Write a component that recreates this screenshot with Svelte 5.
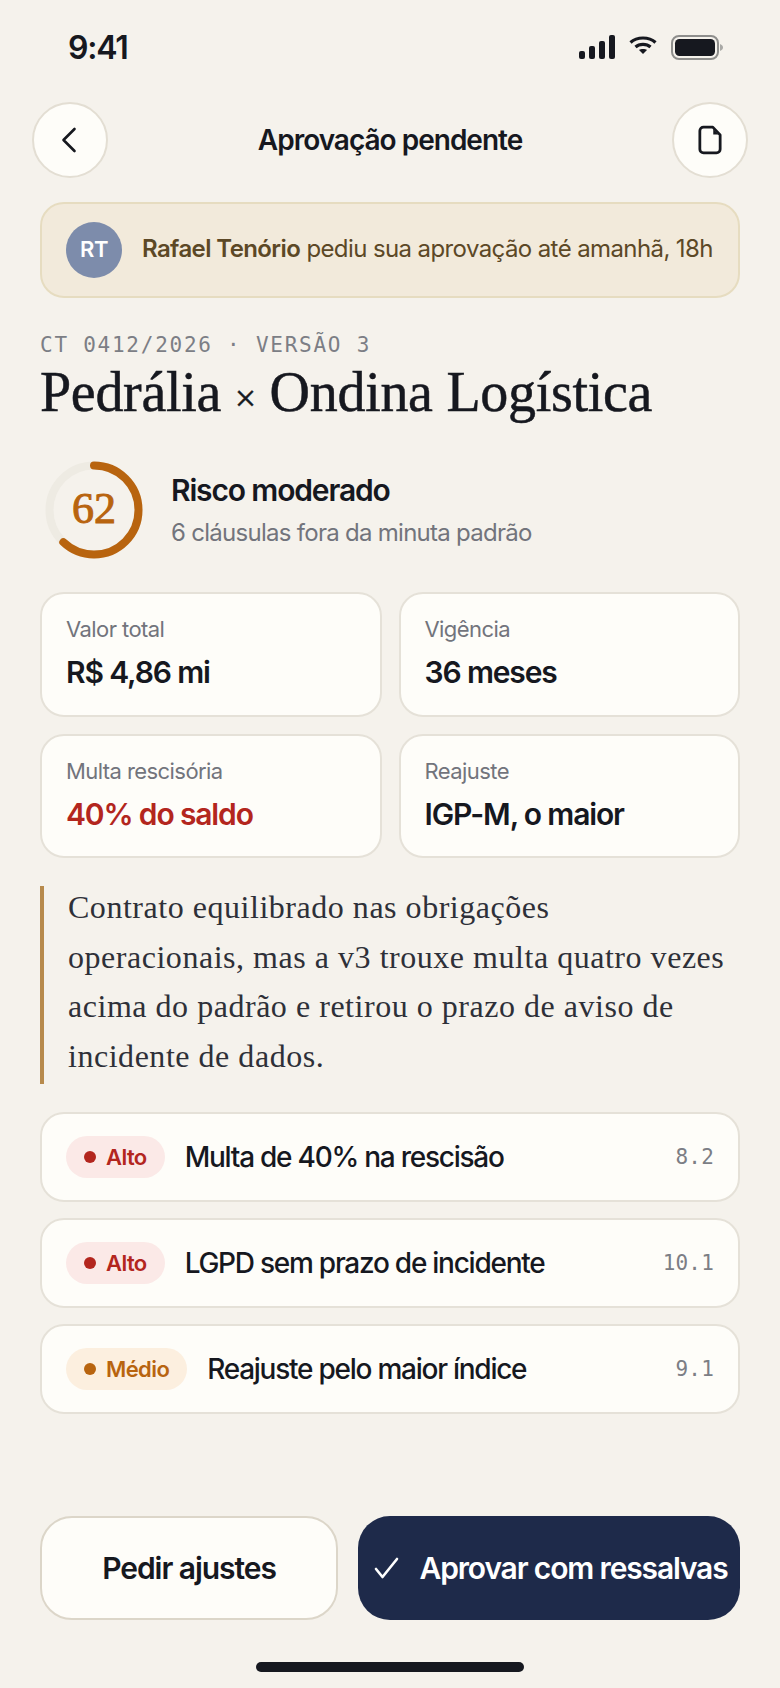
<script>
  const stats = [
    { label: "Valor total", value: "R$ 4,86 mi" },
    { label: "Vigência", value: "36 meses" },
    { label: "Multa rescisória", value: "40% do saldo", danger: true },
    { label: "Reajuste", value: "IGP-M, o maior" },
  ];
  const clauses = [
    { level: "Alto", kind: "high", title: "Multa de 40% na rescisão", ref: "8.2" },
    { level: "Alto", kind: "high", title: "LGPD sem prazo de incidente", ref: "10.1" },
    { level: "Médio", kind: "mid", title: "Reajuste pelo maior índice", ref: "9.1" },
  ];
</script>

<div class="screen">
  <div class="status">
    <span class="time">9:41</span>
    <div class="status-icons">
      <svg width="36" height="24" viewBox="0 0 36 24" fill="#16181f">
        <rect x="0" y="16" width="6" height="8" rx="2" />
        <rect x="10" y="11" width="6" height="13" rx="2" />
        <rect x="20" y="6" width="6" height="18" rx="2" />
        <rect x="30" y="0" width="6" height="24" rx="2" />
      </svg>
      <svg class="wifi" width="28" height="18" viewBox="0 0 28 18" fill="none" stroke="#16181f" stroke-width="3.2">
        <path d="M1.5 6.5 C8 0.5 20 0.5 26.5 6.5" />
        <path d="M6.5 11 C10.5 7.5 17.5 7.5 21.5 11" />
        <path d="M14 18 L10 14 C12 12.6 16 12.6 18 14 Z" fill="#16181f" stroke="none" />
      </svg>
      <svg width="52" height="25" viewBox="0 0 52 25">
        <rect x="1" y="1" width="46" height="23" rx="7" fill="none" stroke="#8e8e8c" stroke-width="2" />
        <rect x="4" y="4" width="40" height="17" rx="4.5" fill="#16181f" />
        <path d="M49 9 C51 10 52 11 52 12.5 C52 14 51 15 49 16 Z" fill="#a9a9a6" />
      </svg>
    </div>
  </div>

  <header class="nav">
    <button class="round" aria-label="Voltar">
      <svg width="28" height="28" viewBox="0 0 28 28" fill="none" stroke="#16181f" stroke-width="2.6" stroke-linecap="round" stroke-linejoin="round">
        <path d="M18.5 3 L7.5 14 L18.5 25" />
      </svg>
    </button>
    <h1>Aprovação pendente</h1>
    <button class="round" aria-label="Documento">
      <svg width="24" height="30" viewBox="0 0 26 32" fill="none" stroke="#16181f" stroke-width="3" stroke-linejoin="round">
        <path d="M6 2 H16 L24 10.5 V26 a4 4 0 0 1 -4 4 H6 a4 4 0 0 1 -4 -4 V6 a4 4 0 0 1 4 -4 Z" />
        <path d="M16.5 4 V10 H22 Z" stroke="none" fill="#16181f" />
      </svg>
    </button>
  </header>

  <div class="banner">
    <span class="avatar">RT</span>
    <p><strong>Rafael Tenório</strong> pediu sua aprovação até amanhã, 18h</p>
  </div>

  <div class="eyebrow">CT 0412/2026 · VERSÃO 3</div>
  <h2>Pedrália <span class="times">×</span> Ondina Logística</h2>

  <div class="risk">
    <div class="gauge">
      <svg width="98" height="98" viewBox="0 0 98 98" fill="none">
        <circle cx="49" cy="49" r="44.5" stroke="#eeebe3" stroke-width="8" />
        <circle
          cx="49"
          cy="49"
          r="44.5"
          stroke="#b8640f"
          stroke-width="8"
          stroke-linecap="round"
          stroke-dasharray="173.4 279.6"
          transform="rotate(-90 49 49)"
        />
      </svg>
      <span>62</span>
    </div>
    <div class="risk-text">
      <strong>Risco moderado</strong>
      <span>6 cláusulas fora da minuta padrão</span>
    </div>
  </div>

  <div class="stats">
    {#each stats as s}
      <div class="stat">
        <span class="stat-label">{s.label}</span>
        <span class="stat-value" class:danger={s.danger}>{s.value}</span>
      </div>
    {/each}
  </div>

  <blockquote>
    <p>
      Contrato equilibrado nas obrigações<br />
      operacionais, mas a v3 trouxe multa quatro vezes<br />
      acima do padrão e retirou o prazo de aviso de<br />
      incidente de dados.
    </p>
  </blockquote>

  <div class="clauses">
    {#each clauses as c}
      <div class="clause">
        <span class="pill {c.kind}"><i></i>{c.level}</span>
        <span class="clause-title">{c.title}</span>
        <span class="clause-ref">{c.ref}</span>
      </div>
    {/each}
  </div>

  <div class="actions">
    <button class="btn ghost">Pedir ajustes</button>
    <button class="btn primary">
      <svg width="25" height="22" viewBox="0 0 25 22" fill="none" stroke="#fff" stroke-width="2.6" stroke-linecap="round" stroke-linejoin="round">
        <path d="M2 12 L8.5 20 L23 2" />
      </svg>
      Aprovar com ressalvas
    </button>
  </div>

  <div class="home"></div>
</div>

<style>
  :global(body) {
    margin: 0;
    background: #f5f2ec;
  }

  .screen {
    width: 780px;
    height: 1688px;
    box-sizing: border-box;
    display: flex;
    flex-direction: column;
    padding: 0 40px;
    background: #f5f2ec;
    color: #16181f;
    font-family: Inter, "Liberation Sans", sans-serif;
    overflow: hidden;
  }

  .status {
    height: 93px;
    margin: 0 17px 0 28px;
    padding-top: 29px;
    box-sizing: border-box;
    display: flex;
    justify-content: space-between;
    align-items: flex-start;
  }

  .time {
    font-size: 32px;
    line-height: 38px;
    font-weight: 600;
    letter-spacing: -1.2px;
  }

  .status-icons {
    display: flex;
    align-items: center;
    gap: 14px;
    height: 38px;
    margin-top: -1px;
  }

  .wifi {
    margin-top: -5px;
  }

  .nav {
    margin: 9px -8px 0;
    display: flex;
    align-items: center;
    justify-content: space-between;
  }

  .nav h1 {
    margin: 0;
    font-size: 28px;
    font-weight: 600;
    letter-spacing: -1px;
  }

  .round {
    width: 76px;
    height: 76px;
    padding: 0;
    border-radius: 50%;
    border: 2px solid #e3ded3;
    background: #fefdf9;
    display: flex;
    align-items: center;
    justify-content: center;
  }

  .banner {
    margin-top: 24px;
    height: 96px;
    box-sizing: border-box;
    border: 2px solid #e6dcc0;
    border-radius: 24px;
    background: #f2eadb;
    display: flex;
    align-items: center;
    gap: 20px;
    padding: 0 24px;
  }

  .avatar {
    width: 56px;
    height: 56px;
    box-sizing: border-box;
    padding-bottom: 3px;
    flex: none;
    border-radius: 50%;
    background: #7d8cab;
    color: #fff;
    font-size: 22px;
    font-weight: 600;
    letter-spacing: -0.5px;
    display: flex;
    align-items: center;
    justify-content: center;
  }

  .banner p {
    margin: 0;
    padding-bottom: 3px;
    font-size: 24px;
    letter-spacing: -0.6px;
    color: #5c4826;
    white-space: nowrap;
  }

  .banner strong {
    font-weight: 600;
  }

  .eyebrow {
    margin-top: 33px;
    font-family: "DejaVu Sans Mono", "Liberation Mono", monospace;
    font-size: 21px;
    line-height: 29px;
    letter-spacing: 1.75px;
    color: #7c7e85;
  }

  h2 {
    margin: 0;
    font-family: "Liberation Serif", serif;
    font-size: 56px;
    line-height: 64px;
    font-weight: 400;
    letter-spacing: -0.3px;
    -webkit-text-stroke: 0.5px #16181f;
    white-space: nowrap;
  }

  .times {
    font-size: 38px;
  }

  .risk {
    margin-top: 31px;
    margin-left: 5px;
    display: flex;
    align-items: center;
    gap: 28px;
  }

  .gauge {
    position: relative;
    width: 98px;
    height: 98px;
  }

  .gauge svg {
    display: block;
  }

  .gauge span {
    position: absolute;
    inset: 0 0 3px;
    display: flex;
    align-items: center;
    justify-content: center;
    font-family: "Liberation Serif", serif;
    font-size: 44px;
    -webkit-text-stroke: 1px #b8640f;
    color: #b8640f;
  }

  .risk-text {
    display: flex;
    flex-direction: column;
    gap: 10px;
    margin-top: -1px;
  }

  .risk-text strong {
    font-size: 30px;
    line-height: 36px;
    font-weight: 600;
    letter-spacing: -1.15px;
  }

  .risk-text span {
    font-size: 24px;
    line-height: 30px;
    letter-spacing: -0.72px;
    color: #72747c;
  }

  .stats {
    margin-top: 33px;
    display: grid;
    grid-template-columns: 1fr 1fr;
    grid-template-rows: 125px 124px;
    gap: 17px;
  }

  .stat {
    box-sizing: border-box;
    border: 2px solid #e5e1d8;
    border-radius: 24px;
    background: #fefdf9;
    padding: 21px 24px 0;
    display: flex;
    flex-direction: column;
    gap: 11px;
  }

  .stat-label {
    font-size: 22px;
    line-height: 28px;
    letter-spacing: -0.57px;
    color: #72747c;
  }

  .stat-value {
    font-size: 30px;
    line-height: 36px;
    font-weight: 600;
    letter-spacing: -1.15px;
  }

  .danger {
    color: #b3261e;
  }

  blockquote {
    margin: 28px 0 0;
    padding: 0 0 0 24px;
    border-left: 4px solid #b78a4c;
  }

  blockquote p {
    margin: -3px 0 3px;
    font-family: "Liberation Serif", serif;
    font-size: 32px;
    line-height: 49.6px;
    letter-spacing: 0.53px;
    color: #2e3038;
    white-space: nowrap;
  }

  .clauses {
    margin-top: 28px;
    display: flex;
    flex-direction: column;
    gap: 16px;
  }

  .clause {
    height: 90px;
    box-sizing: border-box;
    border: 2px solid #e5e1d8;
    border-radius: 24px;
    background: #fefdf9;
    padding: 0 24px;
    display: flex;
    align-items: center;
    gap: 20px;
  }

  .pill {
    height: 42px;
    padding: 0 18px;
    border-radius: 21px;
    display: flex;
    align-items: center;
    gap: 10px;
    font-size: 22px;
    font-weight: 600;
    letter-spacing: -0.6px;
  }

  .pill i {
    width: 12px;
    height: 12px;
    border-radius: 50%;
    background: currentColor;
  }

  .high {
    background: #fbe9e7;
    color: #b3261e;
  }

  .mid {
    background: #fcefdf;
    color: #b8640f;
  }

  .clause-title {
    flex: 1;
    font-size: 28px;
    font-weight: 500;
    letter-spacing: -1.25px;
  }

  .clause-ref {
    font-family: "DejaVu Sans Mono", "Liberation Mono", monospace;
    font-size: 21px;
    letter-spacing: 0.2px;
    color: #7c7e85;
  }

  .actions {
    margin-top: auto;
    display: flex;
    gap: 20px;
  }

  .btn {
    height: 104px;
    box-sizing: border-box;
    border-radius: 32px;
    font-family: inherit;
    font-size: 30px;
    font-weight: 600;
    letter-spacing: -1.05px;
    padding: 0;
    display: flex;
    align-items: center;
    justify-content: center;
  }

  .ghost {
    width: 298px;
    flex: none;
    border: 2px solid #dcd6c9;
    background: #fefdf9;
    color: #16181f;
  }

  .primary {
    flex: 1;
    border: 0;
    background: #1e2a4a;
    color: #fff;
    gap: 20px;
    padding-left: 4px;
    letter-spacing: -1.15px;
  }

  .home {
    width: 268px;
    height: 10px;
    border-radius: 5px;
    background: #16181f;
    margin: 42px auto 16px;
  }
</style>
